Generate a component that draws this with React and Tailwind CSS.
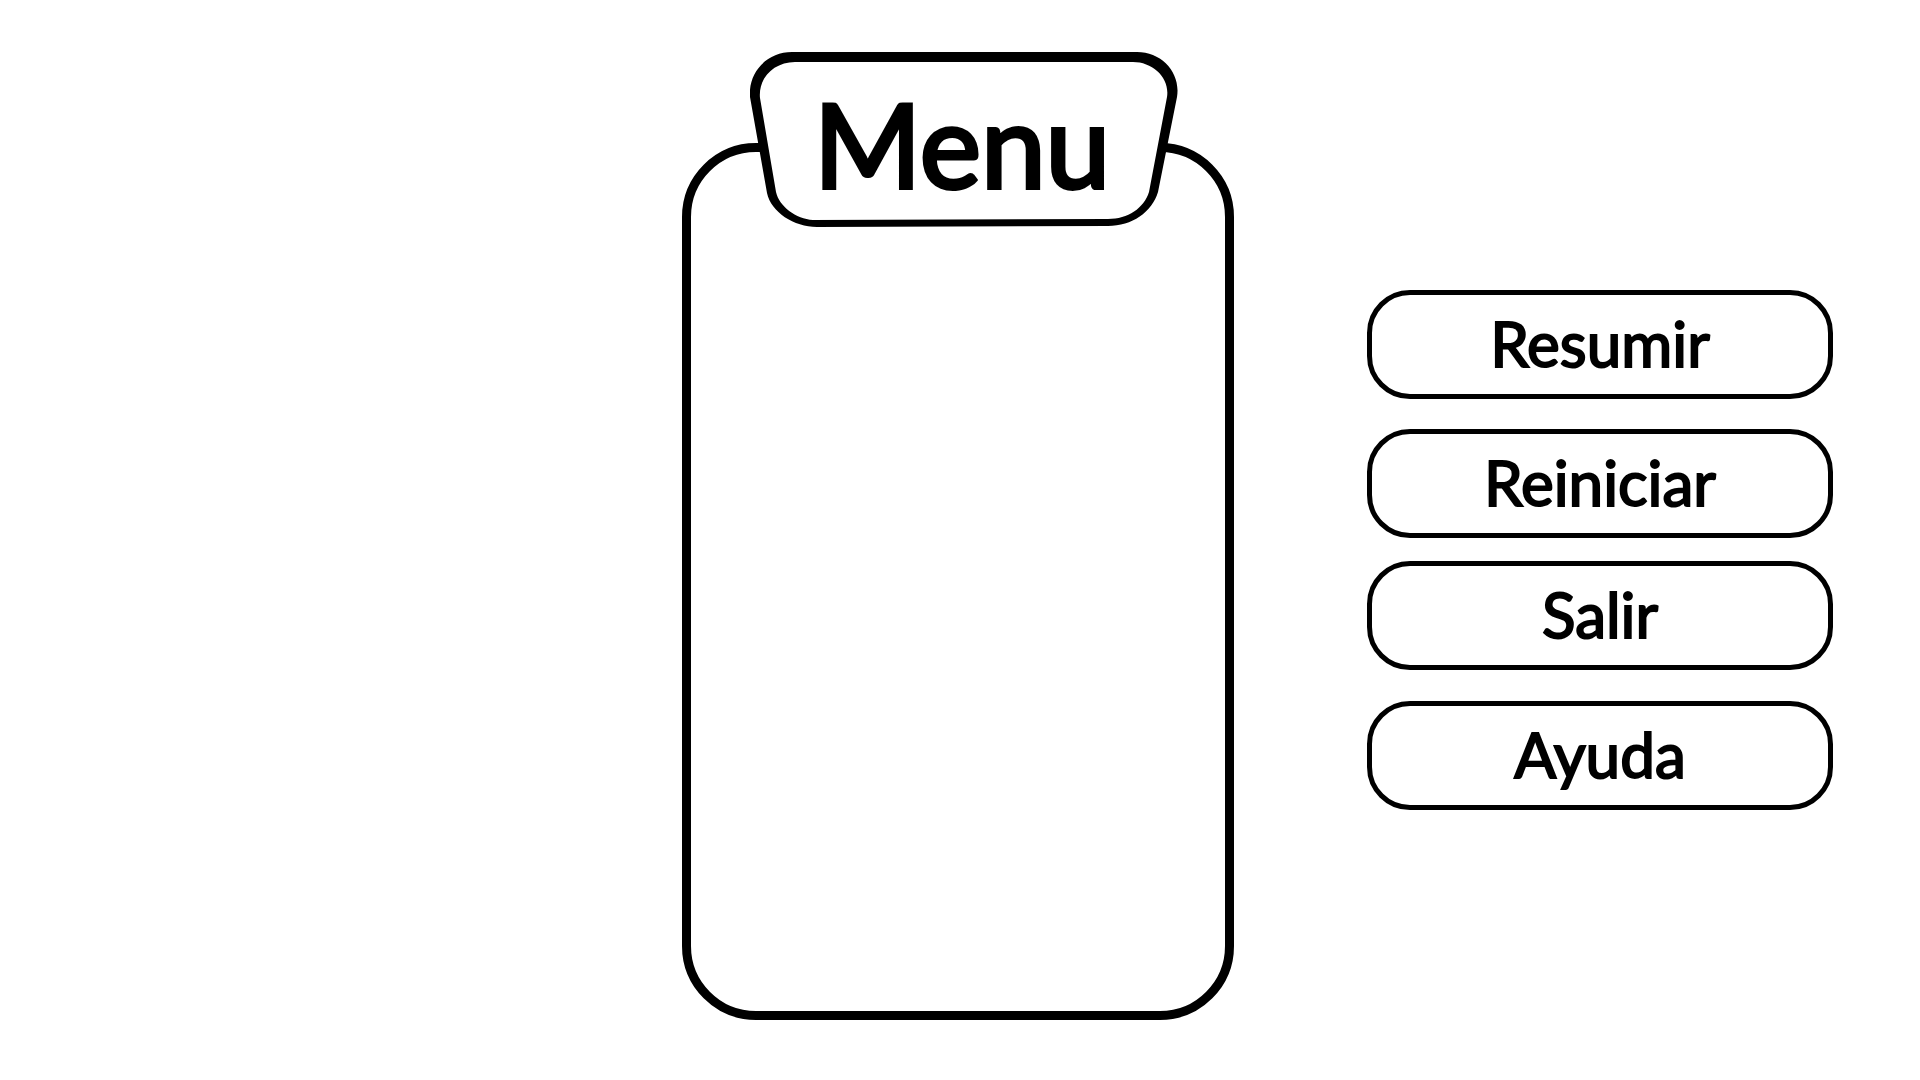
const actions = [
  { label: "Resumir", space: "" },
  { label: "Reiniciar", space: "mt-[30px]" },
  { label: "Salir", space: "mt-[23px]" },
  { label: "Ayuda", space: "mt-[31px]" },
];

function TitlePlate({ children }) {
  return (
    <div className="absolute -top-[100px] left-[59px] flex h-[176px] w-[428px] items-center justify-center">
      <svg viewBox="0 0 428 176" className="absolute inset-0 h-full w-full" aria-hidden="true">
        <path
          fill="white"
          d="M42 4H387C408 4 425 20 422 45L403 140C398 158 382 171 358 171L67 172C44 171 26 158 21 141L5 45C4 20 20 4 42 4Z"
        />
        <path
          fill="black"
          fillRule="evenodd"
          d="M42 0H387C412 0 431 21 427 45L408 140C402 160 382 174 358 174L67 175C44 175 21 160 17 141L0 45C-2 20 17 0 42 0ZM45 10C24 10 8 26 10 46L26 140C29 154 46 167 63 168L358 167C378 167 394 156 399 140L417 45C420 26 403 10 383 10Z"
        />
      </svg>
      <h1 className="relative pt-2 pr-1 text-[116px] leading-none [-webkit-text-stroke:4px_black]">{children}</h1>
    </div>
  );
}

export default function App() {
  return (
    <main className="grid min-h-screen grid-cols-[682fr_552fr_686fr] items-start bg-white pb-[60px] font-[Lato,'Liberation_Sans',sans-serif] text-black">
      <section className="relative col-start-2 mt-[143px] min-h-[877px] rounded-[74px] border-[9px] border-black">
        <TitlePlate>Menu</TitlePlate>
      </section>
      <nav className="mt-[290px] mr-[87px] ml-[133px] flex flex-col">
        {actions.map(({ label, space }) => (
          <button
            key={label}
            type="button"
            className={`flex h-[109px] items-center justify-center rounded-[43px] border-[5px] border-black pb-1 text-[62px] leading-none [-webkit-text-stroke:2px_black] ${space}`}
          >
            {label}
          </button>
        ))}
      </nav>
    </main>
  );
}
